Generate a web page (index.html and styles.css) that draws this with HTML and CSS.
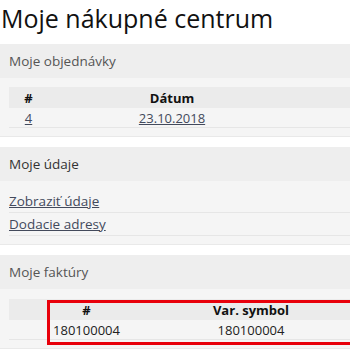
FILE: index.html
```html
<!DOCTYPE html>
<html lang="sk">
<head>
  <meta charset="UTF-8">
  <title>Moje nákupné centrum</title>
  <link rel="stylesheet" href="styles.css">
</head>
<body>
  <div class="page">
    <h1 class="title">Moje nákupné centrum</h1>

    <div class="panel">
      <div class="panel-head">Moje objednávky</div>
      <div class="panel-body">
        <table class="grid orders">
          <colgroup>
            <col class="c-id">
            <col class="c-date">
            <col>
          </colgroup>
          <thead>
            <tr><th>#</th><th>Dátum</th><th></th></tr>
          </thead>
          <tbody>
            <tr><td><a href="#">4</a></td><td><a href="#">23.10.2018</a></td><td></td></tr>
          </tbody>
        </table>
      </div>
    </div>

    <div class="panel">
      <div class="panel-head dark">Moje údaje</div>
      <div class="panel-body">
        <ul class="links">
          <li><a href="#">Zobraziť údaje</a></li>
          <li><a href="#">Dodacie adresy</a></li>
        </ul>
      </div>
    </div>

    <div class="panel">
      <div class="panel-head">Moje faktúry</div>
      <div class="panel-body marked">
        <table class="grid invoices">
          <colgroup>
            <col class="c-id">
            <col class="c-num">
            <col class="c-var">
            <col>
          </colgroup>
          <thead>
            <tr><th></th><th>#</th><th>Var. symbol</th><th></th></tr>
          </thead>
          <tbody>
            <tr><td></td><td>180100004</td><td>180100004</td><td></td></tr>
          </tbody>
        </table>
        <div class="highlight"></div>
      </div>
    </div>
  </div>
</body>
</html>
```

FILE: styles.css
```css
html, body {
  margin: 0;
  padding: 0;
  background: #fff;
  overflow: hidden;
}
body {
  font-family: 'Open Sans', 'Noto Sans', sans-serif;
  font-size: 13px;
  color: #222;
}
.page {
  width: 420px;
}
.title {
  font-size: 25px;
  font-weight: 400;
  color: #111;
  margin: 0;
  padding: 0 0 0 1px;
  line-height: 36px;
  height: 44px;
}
.panel {
  background: #f5f5f5;
  border-bottom: 1px solid #e9e9e9;
  margin-bottom: 10px;
}
.panel-head {
  background: #eee;
  height: 34px;
  line-height: 34px;
  padding: 0 9px;
  color: #555;
  font-size: 13.5px;
}
.panel-head.dark {
  color: #333;
}
.panel-body {
  padding: 9px 9px 8px;
}
a {
  color: #434a5c;
  text-decoration: underline;
}
.grid {
  width: 100%;
  border-collapse: collapse;
  table-layout: fixed;
}
.grid th {
  background: #ebebeb;
  height: 21px;
  padding: 0;
  font-weight: 700;
  color: #111;
}
.grid td {
  height: 19px;
  padding: 0;
  text-align: center;
  border-bottom: 1px solid #e6e6e6;
}
.c-id { width: 39px; }
.c-date { width: 248px; }
.c-num { width: 77px; }
.c-var { width: 252px; }
.links {
  list-style: none;
  margin: 0;
  padding: 0;
  font-size: 13.5px;
}
.links li {
  height: 22px;
  line-height: 22px;
  border-bottom: 1px solid #e6e6e6;
}
.invoices {
  margin-top: 1px;
}
.marked {
  position: relative;
}
.highlight {
  position: absolute;
  left: 47px;
  top: 11px;
  width: 360px;
  height: 39px;
  border: 3px solid #e8000b;
}
```
